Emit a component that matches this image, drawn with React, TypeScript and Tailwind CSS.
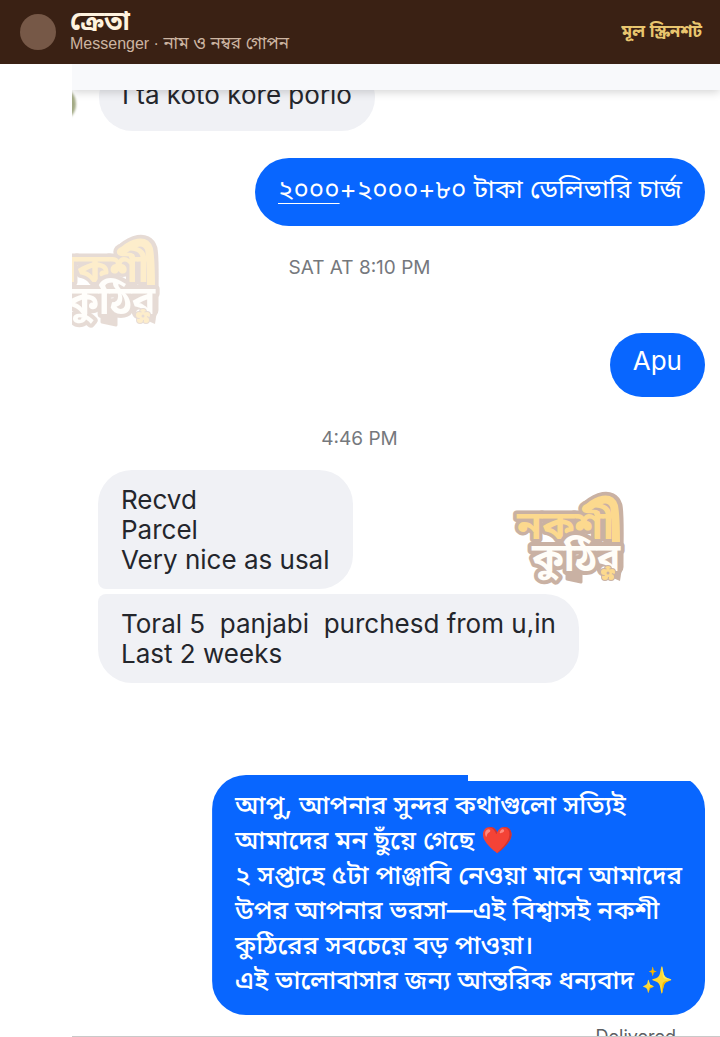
import type { ReactNode } from "react";
import clsx from "clsx";

const chatFont =
  "font-[Inter,'Noto_Sans_Bengali','Noto_Sans',sans-serif]";

function Bubble({
  mine = false,
  className,
  children,
}: {
  mine?: boolean;
  className?: string;
  children: ReactNode;
}) {
  return (
    <div
      className={clsx(
        "relative w-fit whitespace-pre-wrap rounded-[34px] px-[23px] text-[26px]",
        mine ? "self-end bg-[#0866ff] text-white" : "self-start bg-[#f0f1f5] text-[#24262c]",
        className,
      )}
    >
      {children}
    </div>
  );
}

function TimeLabel({ className, children }: { className?: string; children: ReactNode }) {
  return (
    <div className={clsx("pr-[73px] text-center text-[19px] leading-6 text-[#75787d]", className)}>
      {children}
    </div>
  );
}

function Watermark({ className }: { className?: string }) {
  return (
    <svg viewBox="0 0 112 94" className={clsx("overflow-visible", className)} role="img" aria-label="নকশী কুঠির">
      <g
        fontFamily="'Noto Sans Bengali','Noto Sans',sans-serif"
        fontWeight="700"
        strokeLinejoin="round"
        strokeLinecap="round"
        paintOrder="stroke"
      >
        <path d="M76 16C84 9 98 3 102 15C104 25 103 40 103 76" stroke="#c9b1a3" strokeWidth="15" fill="none" />
        <path d="M84 80L107 90L110 70L82 60Z" fill="#c9b1a3" />
        <text x="4" y="48" fontSize="40" fill="#fcd98e" stroke="#c9b1a3" strokeWidth="7">নকশী</text>
        <path d="M76 16C84 9 97 4 101 15C103 25 103 40 103 56" stroke="#fcd98e" strokeWidth="8" fill="none" />
        <path d="M54 80L54 88L68 91L68 80Z" fill="#c9b1a3" stroke="#c9b1a3" strokeWidth="3" />
        <text x="19" y="80" fontSize="39" fill="#fffdf8" stroke="#c9b1a3" strokeWidth="8">কুঠির</text>
        <g fill="#fcd98e" stroke="#c9b1a3" strokeWidth="2">
          <circle cx="95" cy="78" r="3" />
          <circle cx="99" cy="81" r="3" />
          <circle cx="98" cy="86" r="3" />
          <circle cx="92" cy="86" r="3" />
          <circle cx="91" cy="81" r="3" />
        </g>
        <circle cx="95" cy="82" r="4" fill="#fcd98e" />
        <circle cx="95" cy="82" r="1.5" fill="#c9b1a3" />
      </g>
    </svg>
  );
}

export default function App() {
  return (
    <div className="min-h-screen bg-white">
      <header className="flex h-16 items-center bg-[#3a2114] pl-5 pr-[18px] font-['Liberation_Sans','Noto_Sans_Bengali',sans-serif]">
        <div className="size-9 shrink-0 rounded-full bg-[#765847]" />
        <div className="ml-[14px] flex-1">
          <h1 className="text-[26px] font-bold leading-5 text-[#fff3df]">ক্রেতা</h1>
          <p className="pt-[3px] text-[16px] leading-5 text-[#cdb5a2]">
            Messenger · <span className="text-[17px]">নাম ও নম্বর গোপন</span>
          </p>
        </div>
        <span className="text-[17px] font-bold text-[#e9c66f]">মূল স্ক্রিনশট</span>
      </header>

      <main className={clsx("relative ml-[72px] flex flex-col overflow-hidden border-b border-[#c9c9c9]", chatFont)}>
        <div className="relative z-10 h-[26px] bg-[#f8f9fb] shadow-[0_2px_10px_rgba(0,0,0,0.18)]" />
        <div className="relative flex h-[41px] flex-col justify-end overflow-hidden pl-[27px]">
          <div className="absolute -left-8 -top-1 size-9 rounded-full bg-[#a3aa85] blur-[1px]" />
          <Bubble className="pb-[21px] pt-4 leading-[30px]">I ta koto kore porlo</Bubble>
        </div>

        <div className="flex flex-col pl-[26px] pr-[15px]">
          <Bubble mine className="mt-[27px] pb-[20px] pt-[13px] leading-[35px]">
            <span className="underline decoration-1 underline-offset-[5px]">২০০০</span>+২০০০+৮০ টাকা ডেলিভারি চার্জ
          </Bubble>
        </div>
        <TimeLabel className="mt-[30px]">SAT AT 8:10 PM</TimeLabel>
        <div className="flex flex-col pl-[26px] pr-[15px]">
          <Bubble mine className="mt-[53px] pb-[21px] pt-[13px] leading-[30px]">Apu</Bubble>
        </div>
        <TimeLabel className="mt-[30px]">4:46 PM</TimeLabel>

        <div className="flex flex-col gap-[5px] pl-[26px] pr-[15px]">
          <Bubble className="mt-[19px] rounded-bl-lg pb-[14px] pt-[15px] leading-[30px]">
            {"Recvd\nParcel\nVery nice as usal"}
          </Bubble>
          <Bubble className="rounded-tl-lg pb-[14px] pt-[15px] leading-[30px]">
            {"Toral 5  panjabi  purchesd from u,in\nLast 2 weeks"}
          </Bubble>
          <Bubble
            mine
            className="mt-[87px] pb-[18px] pt-3 font-medium leading-[35px] [clip-path:polygon(0_0,calc(100%-237px)_0,calc(100%-237px)_6px,100%_6px,100%_100%,0_100%)]"
          >
            {"আপু, আপনার সুন্দর কথাগুলো সত্যিই\nআমাদের মন ছুঁয়ে গেছে ❤️\n২ সপ্তাহে ৫টা পাঞ্জাবি নেওয়া মানে আমাদের\nউপর আপনার ভরসা—এই বিশ্বাসই নকশী\nকুঠিরের সবচেয়ে বড় পাওয়া।\nএই ভালোবাসার জন্য আন্তরিক ধন্যবাদ ✨"}
          </Bubble>
        </div>
        <div className="h-[21px] overflow-hidden pr-11 pt-[10px] text-right text-[18px] leading-6 text-[#5c5f64]">
          Delivered
        </div>

        <Watermark className="absolute -left-6 top-[170px] w-28 opacity-45" />
        <Watermark className="absolute left-[441px] top-[427px] w-28" />
      </main>
    </div>
  );
}
